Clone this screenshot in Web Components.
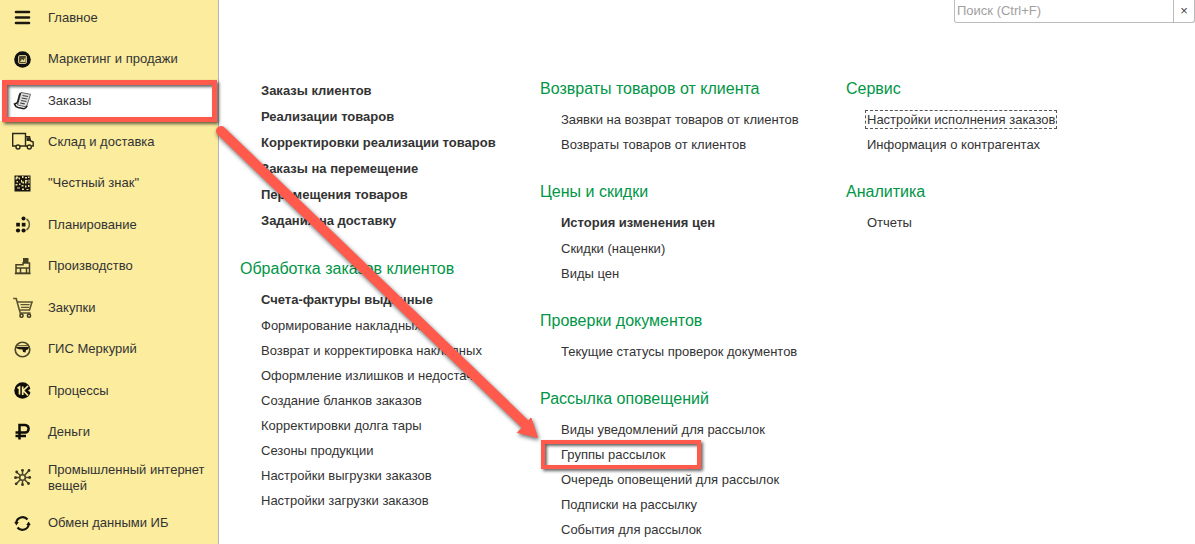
<!DOCTYPE html>
<html lang="ru">
<head>
<meta charset="utf-8">
<title>Заказы</title>
<style>
  html { --brand: #fbec9e; --accent: #ff5a4b; --ink: #333; --green: #009646; }
  body { margin: 0; background: #fff; color: var(--ink); font: 13px/16px "Liberation Sans", Arial, sans-serif; }
</style>
</head>
<body>
<app-shell>
  <section-item slot="nav" icon="menu">Главное</section-item>
  <section-item slot="nav" icon="marketing">Маркетинг и продажи</section-item>
  <section-item slot="nav" icon="orders" current>Заказы</section-item>
  <section-item slot="nav" icon="truck">Склад и доставка</section-item>
  <section-item slot="nav" icon="code">"Честный знак"</section-item>
  <section-item slot="nav" icon="planning">Планирование</section-item>
  <section-item slot="nav" icon="factory">Производство</section-item>
  <section-item slot="nav" icon="cart">Закупки</section-item>
  <section-item slot="nav" icon="mercury">ГИС Меркурий</section-item>
  <section-item slot="nav" icon="process">Процессы</section-item>
  <section-item slot="nav" icon="ruble">Деньги</section-item>
  <section-item slot="nav" icon="iot">Промышленный интернет вещей</section-item>
  <section-item slot="nav" icon="sync">Обмен данными ИБ</section-item>

  <search-field slot="search"></search-field>

  <command-column>
    <command-group>
      <command-link bold>Заказы клиентов</command-link>
      <command-link bold>Реализации товаров</command-link>
      <command-link bold>Корректировки реализации товаров</command-link>
      <command-link bold>Заказы на перемещение</command-link>
      <command-link bold>Перемещения товаров</command-link>
      <command-link bold>Задания на доставку</command-link>
    </command-group>
    <command-group heading="Обработка заказов клиентов">
      <command-link bold>Счета-фактуры выданные</command-link>
      <command-link>Формирование накладных</command-link>
      <command-link>Возврат и корректировка накладных</command-link>
      <command-link>Оформление излишков и недостач</command-link>
      <command-link>Создание бланков заказов</command-link>
      <command-link>Корректировки долга тары</command-link>
      <command-link>Сезоны продукции</command-link>
      <command-link>Настройки выгрузки заказов</command-link>
      <command-link>Настройки загрузки заказов</command-link>
    </command-group>
  </command-column>
  <command-column>
    <command-group heading="Возвраты товаров от клиента">
      <command-link>Заявки на возврат товаров от клиентов</command-link>
      <command-link>Возвраты товаров от клиентов</command-link>
    </command-group>
    <command-group heading="Цены и скидки">
      <command-link bold>История изменения цен</command-link>
      <command-link>Скидки (наценки)</command-link>
      <command-link>Виды цен</command-link>
    </command-group>
    <command-group heading="Проверки документов">
      <command-link>Текущие статусы проверок документов</command-link>
    </command-group>
    <command-group heading="Рассылка оповещений">
      <command-link>Виды уведомлений для рассылок</command-link>
      <command-link marked>Группы рассылок</command-link>
      <command-link>Очередь оповещений для рассылок</command-link>
      <command-link>Подписки на рассылку</command-link>
      <command-link>События для рассылок</command-link>
    </command-group>
  </command-column>
  <command-column>
    <command-group heading="Сервис">
      <command-link focused>Настройки исполнения заказов</command-link>
      <command-link>Информация о контрагентах</command-link>
    </command-group>
    <command-group heading="Аналитика">
      <command-link>Отчеты</command-link>
    </command-group>
  </command-column>
</app-shell>
<callout-arrow></callout-arrow>

<script>
const ICONS = {
  menu: `<g stroke="#1c1a10" stroke-width="2.600" stroke-linecap="round"><path d="M6 7h13M6 12.500h13M6 18h13"/></g>`,
  marketing: `<circle cx="12.500" cy="12.500" r="8.300" fill="#111"/><rect x="8.500" y="8.500" width="8" height="8" rx="1.500" fill="#4d482f" stroke="#cfc383"/><path d="M10 15l2-3 1.500 1.500L15.500 10v5z" fill="#e3d68f"/>`,
  orders: `<path d="M11 4.500l9.500 1.800L16.500 19l-9-2z" fill="#ddd" stroke="#666"/><path d="M12.500 7.500l5.500 1M11.700 10l5.500 1M11 12.500l5.500 1M10.200 15l4.500 .8" stroke="#444" stroke-width="1.200"/><path d="M10.500 5C8.500 8 9 12 7 15l-2.500 1c.5 2 1.500 3 3.500 3.500l6 1.200c1.500-.3 2.500-1.300 3-3" fill="none" stroke="#222" stroke-width="1.600"/>`,
  truck: `<g fill="none" stroke="#2b2818" stroke-width="1.400"><path d="M6 17H2.700V4.500h12.800V17H10"/><path d="M15.500 7.700h4l1 4.300 2.700 1v4H21.500M17 17h-1.500"/><circle cx="8" cy="18" r="2"/><circle cx="19.300" cy="18" r="2"/></g><path d="M16.500 8.500h3l1 3.500h-4z" fill="#2b2818"/>`,
  code: `<rect x="4.500" y="4.500" width="16" height="16" fill="#191710"/><path d="M6 5.500h2v1h2v2H9V7.500H7v1H5.500v-2H6zM12 5h1.500v2H12zM15 6h2v1.500h-2zM18 5.500h1.500v1.500H18zM18.500 8.500h1v4h-1zM11 9h1v1.500h2v2h-1.500v-1H11zM15 9h2.500v1.500h-1v2H15zM6.500 10h1.500v1.500H6.500zM5.500 13h2v1.500h-2zM9 12.500h1.500v1.500H9zM11.500 14h2v1.500h-2zM15 14.500h1.500v2H15zM18 14h1.500v2H18zM7 16.500h3v1H7zM12 17.500h2v1.500h-2zM16.500 18h2v1h-2z" fill="#e9dc95"/>`,
  planning: `<g fill="#15130c"><circle cx="13.500" cy="6.500" r="2"/><rect x="6.200" y="10.800" width="3.700" height="3.700"/><rect x="11.800" y="10.800" width="3.700" height="3.700"/><circle cx="8" cy="18.500" r="2.100"/><circle cx="13.600" cy="18.500" r="2.100"/></g><path d="M16.500 7c3.800 2.500 3.800 8.500 0 11" fill="none" stroke="#6a6340" stroke-width="1.500"/>`,
  factory: `<g fill="none" stroke="#464025" stroke-width="1.500"><path d="M6 19.300v-8.500h7V9h6.500v10.300z"/><path d="M6 14h13.500M10.500 14v5M16.500 14v5"/></g><path d="M13 4h5.500v5H13z" fill="#464025"/><path d="M4.800 18.700h15.700v1.600H4.800z" fill="#464025"/>`,
  cart: `<g fill="none" stroke="#5b5434" stroke-width="1.600"><path d="M3.200 3.500h3l4 14.500h10.300M7.500 7h14.500l-2.500 8H10"/><path d="M10.500 9.700h9M11 12.300h8" stroke-width="1.300"/></g><g fill="none" stroke="#3a351f" stroke-width="1.500"><circle cx="11.500" cy="20.700" r="1.600"/><circle cx="19" cy="20.700" r="1.600"/></g>`,
  mercury: `<circle cx="12.500" cy="12.500" r="7.300" fill="none" stroke="#4c462a" stroke-width="1.600"/><path d="M6 10h13l-1 2.500-2 .5-.5 2.500-2.500-.5-.5-2.500-3.500-.3-2.500-1z" fill="#1b180c"/><path d="M7 8.700h11" stroke="#4c462a"/>`,
  process: `<circle cx="12.500" cy="12.500" r="8.200" fill="#0f0e08"/><g fill="none" stroke="#fbec9e" stroke-width="1.700"><path d="M7.500 10.300l2-1.300v7.500M12.700 8.500v8.500M18 8l-4.700 4.500 4.700 5"/></g><path d="M18 12.500l3.500-2.500v5z" fill="#fbec9e"/>`,
  ruble: `<path d="M9.500 20.500V6h5.500c4.800 0 4.800 7.500 0 7.500H5.500M5.500 17h10.500" fill="none" stroke="#0f0e08" stroke-width="2.500"/>`,
  iot: `<circle cx="12.500" cy="12.500" r="2.800" fill="none" stroke="#4c462a" stroke-width="1.600"/><g stroke="#4c462a" stroke-width="1.500"><path d="M12.500 10V5M12.500 15v5M10 12.500H5M15 12.500h5M10.500 10.500L6.500 7M14.500 10.500L19 5.500M10.500 14.500L6 19M14.500 14.500l4 4"/></g><g fill="#3a351f"><circle cx="12.500" cy="5.300" r="1.400"/><circle cx="5.500" cy="12.700" r="1.400"/><circle cx="19.700" cy="12.500" r="1.400"/><circle cx="6.700" cy="7" r="1.400"/><circle cx="19" cy="5.500" r="1.400"/><circle cx="6.200" cy="18.800" r="1.400"/><circle cx="18.500" cy="18.500" r="1.400"/><circle cx="12.500" cy="19.700" r="1.400"/></g>`,
  sync: `<g fill="none" stroke="#15130c" stroke-width="2.200"><path d="M6.200 12A6.400 6.400 0 0 1 17.500 8.500M18.800 13A6.400 6.400 0 0 1 7.500 16.500"/></g><path d="M4.300 11h4.500l-2.500 3.500zM20.700 14h-4.500l2.500-3.500z" fill="#15130c"/>`
};

const define = (name, render) => customElements.define(name, class extends HTMLElement {
  constructor() {
    super();
    this.attachShadow({ mode: 'open' });
  }
  connectedCallback() {
    this.shadowRoot.innerHTML = render(this);
  }
});

define('app-shell', () => `
  <style>
    :host { display: grid; grid-template-columns: 219px minmax(0, 1fr); min-height: 100vh; overflow: hidden; }
    nav { display: flex; flex-direction: column; background: var(--brand); border-right: 1px solid #b4b4b4; }
    .sections { flex: 1; display: flex; flex-direction: column; margin-top: -3px; }
    header { display: flex; justify-content: flex-end; }
    .commands { display: grid; grid-template-columns: 300fr 306fr 349fr; padding: 55px 0 0 21px; }
  </style>
  <nav aria-label="Разделы"><div class="sections"><slot name="nav"></slot></div></nav>
  <main>
    <header><slot name="search"></slot></header>
    <div class="commands"><slot></slot></div>
  </main>`);

define('section-item', el => `
  <style>
    :host { flex: 1 0 41px; display: flex; position: relative; }
    :host([current]) { background: #fff; }
    :host([current])::after {
      content: ""; position: absolute; z-index: 2; inset: 0 1px -1px 2px; pointer-events: none;
      border: 5px solid var(--accent); box-shadow: 2px 2px 3px #0009, inset 2px 2px 3px #0009;
    }
    a { flex: 1; display: flex; align-items: center; gap: 13px; padding: 9px 12px 9px 10px; box-sizing: border-box; color: inherit; text-decoration: none; }
    svg { flex: none; width: 25px; height: 25px; margin: -5px 0; }
  </style>
  <a href="#"${el.hasAttribute('current') ? ' aria-current="page"' : ''}>
    <svg viewBox="0 0 25 25" aria-hidden="true">${ICONS[el.getAttribute('icon')]}</svg>
    <span><slot></slot></span>
  </a>`);

define('search-field', () => `
  <style>
    :host { display: flex; width: 241px; height: 23px; box-sizing: border-box; border: 1px solid #bbb; border-top: 0; border-radius: 0 0 3px 3px; }
    input { flex: 1; min-width: 0; border: 0; padding: 0 2px; background: none; outline: 0; font: inherit; color: var(--ink); }
    input::placeholder { color: #a0a0a0; opacity: 1; }
    button { width: 21px; padding: 0; border: 0; border-left: 1px solid #bbb; background: none; font: inherit; color: #444; }
  </style>
  <input type="text" placeholder="Поиск (Ctrl+F)" aria-label="Поиск">
  <button type="button" aria-label="Очистить">×</button>`);

define('command-column', () => `
  <style>
    :host { display: flex; flex-direction: column; gap: 24px; min-width: 0; }
  </style>
  <slot></slot>`);

define('command-group', el => `
  <style>
    :host { display: block; }
    h2 { margin: 0 0 7px; font-size: 16px; line-height: 22px; font-weight: 400; color: var(--green); }
    .links { display: flex; flex-direction: column; padding-left: 21px; }
  </style>
  ${el.hasAttribute('heading') ? `<h2>${el.getAttribute('heading')}</h2>` : ''}
  <div class="links"><slot></slot></div>`);

define('command-link', () => `
  <style>
    :host { display: block; position: relative; line-height: 25px; white-space: nowrap; }
    :host([bold]) { font-weight: 700; line-height: 26px; }
    a { color: inherit; text-decoration: none; }
    :host([focused]) a { outline: 1px dashed #555; outline-offset: 1px; }
    :host([marked])::after {
      content: ""; position: absolute; left: -20px; top: -2px; width: 160px; height: 29px; box-sizing: border-box; pointer-events: none;
      border: 4px solid var(--accent); box-shadow: 2px 2px 3px #0009, inset 2px 2px 3px #0009;
    }
  </style>
  <a href="#"><slot></slot></a>`);

define('callout-arrow', () => `
  <style>
    :host { position: absolute; left: 0; top: 0; z-index: 3; pointer-events: none; }
    svg { display: block; width: 560px; height: 460px; filter: drop-shadow(1px 2px 2px #0009); }
  </style>
  <svg viewBox="0 0 560 460" aria-hidden="true">
    <path d="M221 131L524 423" stroke="#ff5a4b" stroke-width="10" stroke-linecap="round"/>
    <path d="M531 418l6.500 19.500-20-5z" fill="#ff5a4b" stroke="#ff5a4b" stroke-width="1" stroke-linejoin="round"/>
  </svg>`);
</script>
</body>
</html>
